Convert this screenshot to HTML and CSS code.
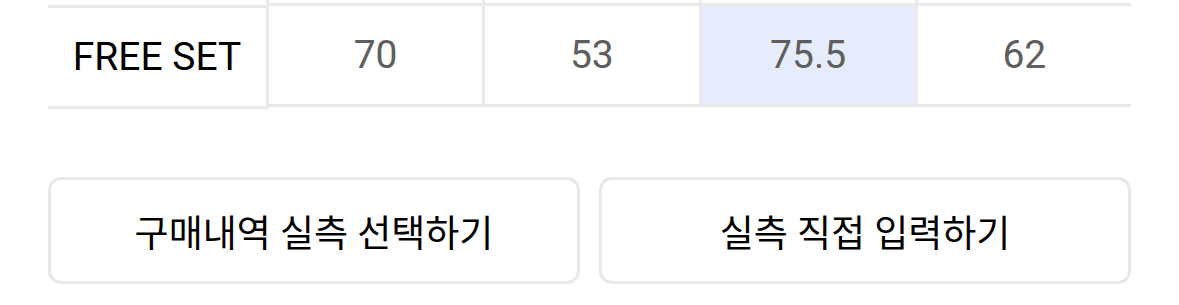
FILE: index.html
```html
<!DOCTYPE html>
<html lang="ko">
<head>
<meta charset="utf-8">
<title>실측 사이즈</title>
<link rel="stylesheet" href="styles.css">
</head>
<body>
<div class="page">
  <div class="size-table">
    <div class="label-col">
      <div class="stub"></div>
      <div class="label-cell">FREE SET</div>
    </div>
    <div class="data-col">
      <div class="stub"></div>
      <div class="data-cell">70</div>
    </div>
    <div class="data-col bordered">
      <div class="stub"></div>
      <div class="data-cell">53</div>
    </div>
    <div class="data-col bordered">
      <div class="stub"></div>
      <div class="data-cell highlight">75.5</div>
    </div>
    <div class="data-col bordered">
      <div class="stub"></div>
      <div class="data-cell">62</div>
    </div>
  </div>
  <div class="actions">
    <button class="action-btn" type="button">구매내역 실측 선택하기</button>
    <button class="action-btn" type="button">실측 직접 입력하기</button>
  </div>
</div>
</body>
</html>
```
FILE: styles.css
```css
html, body {
  margin: 0;
  padding: 0;
  background: #ffffff;
}

.page {
  width: 1179px;
  height: 305px;
  padding: 0 48px;
  box-sizing: border-box;
  font-family: Roboto, "Noto Sans CJK KR", sans-serif;
  overflow: hidden;
}

.size-table {
  display: flex;
  align-items: flex-start;
}

.label-col {
  width: 221px;
  flex: none;
  border-right: 3px solid #e9e9e9;
  box-sizing: border-box;
  display: flex;
  flex-direction: column;
}

.label-col .stub {
  height: 5px;
}

.label-cell {
  height: 104px;
  box-sizing: border-box;
  border-top: 3px solid #e9e9e9;
  border-bottom: 3px solid #e9e9e9;
  display: flex;
  align-items: center;
  justify-content: center;
  font-size: 39px;
  font-weight: 400;
  color: #000000;
}

.data-col {
  flex: 1;
  display: flex;
  flex-direction: column;
  box-sizing: border-box;
}

.data-col.bordered {
  border-left: 3px solid #e9e9e9;
}

.data-col .stub {
  height: 3px;
}

.data-cell {
  height: 104px;
  box-sizing: border-box;
  border-top: 3px solid #e9e9e9;
  border-bottom: 3px solid #e9e9e9;
  display: flex;
  align-items: center;
  justify-content: center;
  font-size: 39px;
  font-weight: 400;
  color: #5e5e5e;
}

.data-cell.highlight {
  background: #e7ecfd;
}

.actions {
  display: flex;
  gap: 19px;
  margin-top: 68px;
}

.action-btn {
  flex: 1;
  height: 107px;
  border: 3px solid #e8e8e8;
  border-radius: 13px;
  background: #ffffff;
  font-family: Roboto, "Noto Sans CJK KR", sans-serif;
  font-size: 37px;
  font-weight: 400;
  letter-spacing: 0;
  color: #000000;
  padding: 0;
  margin: 0;
  display: flex;
  align-items: center;
  justify-content: center;
}
```
